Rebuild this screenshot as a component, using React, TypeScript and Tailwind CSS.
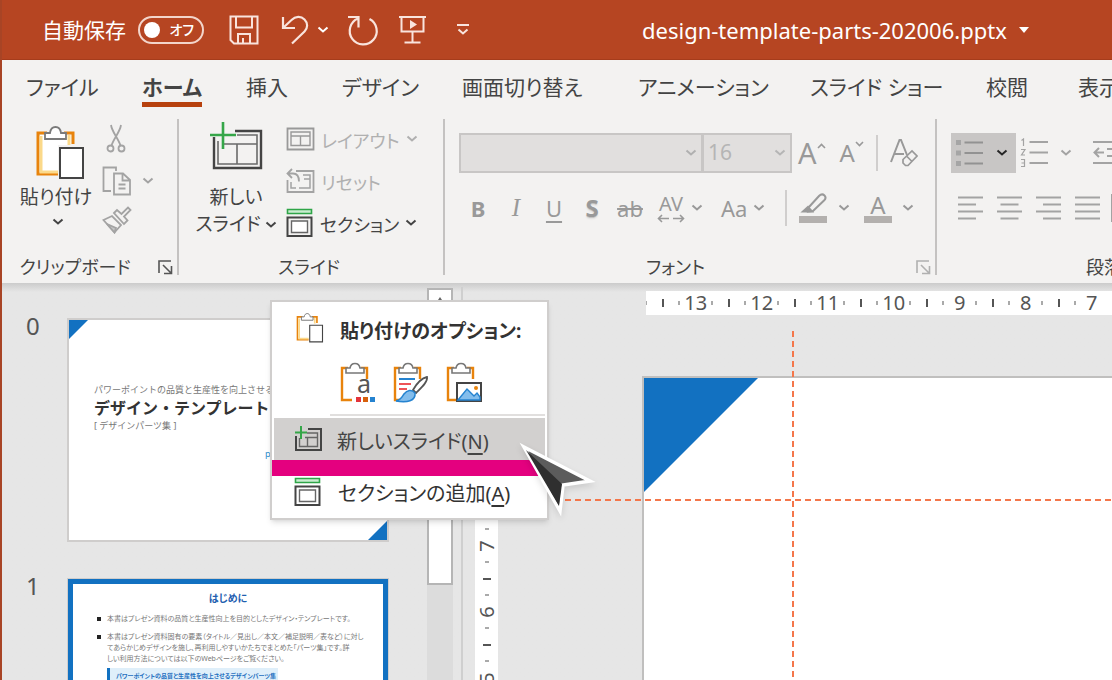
import type { ReactNode } from "react";

const TABS = [
  { label: "ファイル", width: "w-29" },
  { label: "ホーム", width: "w-26", active: true },
  { label: "挿入", width: "w-24" },
  { label: "デザイン", width: "w-30" },
  { label: "画面切り替え", width: "w-44" },
  { label: "アニメーション", width: "w-43" },
  { label: "スライド ショー", width: "w-44" },
  { label: "校閲", width: "w-23" },
  { label: "表示", width: "w-24" },
];

const ALIGNMENTS = [
  { name: "左揃え", d: "M1 1.5H26M1 8.5H19M1 15.5H26M1 22.5H19" },
  { name: "中央揃え", d: "M1 1.5H26M4.5 8.5H22.5M1 15.5H26M4.5 22.5H22.5" },
  { name: "右揃え", d: "M1 1.5H26M8 8.5H26M1 15.5H26M8 22.5H26" },
  { name: "両端揃え", d: "M1 1.5H26M1 8.5H26M1 15.5H26M1 22.5H26" },
];

function Chevron({ className = "" }: { className?: string }) {
  return (
    <svg className={`shrink-0 ${className}`} width="12" height="8" viewBox="0 0 12 8" fill="none" stroke="currentColor" strokeWidth="2">
      <path d="M1.5 1.5 6 5.5l4.5-4" />
    </svg>
  );
}

function Launcher({ name, className }: { name: string; className: string }) {
  return (
    <button aria-label={name} className={className}>
      <svg width="15" height="15" viewBox="0 0 15 15" fill="none" stroke="currentColor" strokeWidth="1.6">
        <path d="M1 13V1h12M5 5l8 8M13.5 6v7.5H6" />
      </svg>
    </button>
  );
}

function Clipboard() {
  return (
    <>
      <path d="M11 7H2v41h20M28 7h9v11" fill="none" stroke="#e8830c" strokeWidth="3" />
      <path d="M4 9h31v10H22v27H4z" fill="#fff" />
      <path d="M5 10v36h17" fill="none" stroke="#fbd98a" strokeWidth="3" />
      <path d="M33 9v10" stroke="#fbd98a" strokeWidth="3" />
      <path d="M9 13V7h5c1-8 10-8 11 0h5v6z" fill="#fff" stroke="#7a7a7a" strokeWidth="1.8" />
      <path d="M24 22h23v30H24z" fill="#fff" stroke="#444" strokeWidth="2" />
    </>
  );
}

function NewSlideIcon({ width, height }: { width: number; height: number }) {
  return (
    <svg width={width} height={height} viewBox="0 0 54 48" fill="none">
      <path d="M5 15v31h47V9H26" stroke="#444" strokeWidth="2.4" />
      <path d="M9 19v23h39V13H28M15 22h33M28 22v20" stroke="#6a6a6a" strokeWidth="1.6" />
      <path d="M14 0v27M1 13h26" stroke="#35a649" strokeWidth="2.6" />
    </svg>
  );
}

function SmallNewSlideIcon() {
  return (
    <svg width="29" height="26" viewBox="0 0 29 26" fill="none">
      <path d="M2 10v14h25V3H14" stroke="#444" strokeWidth="2" />
      <path d="M5.500 12v8.500h18V7H13M11 11.500h12M13.500 11.500v9" stroke="#666" strokeWidth="1.400" />
      <path d="M7 0v13M1 6.500h12" stroke="#35a649" strokeWidth="2" />
    </svg>
  );
}

function SectionIcon() {
  return (
    <svg className="shrink-0" width="28" height="30" viewBox="0 0 28 30" fill="none">
      <path d="M1.5 1.5h24v4h-24z" fill="#c9edcf" stroke="#2fa548" strokeWidth="1.6" />
      <path d="M1.5 9.5h24V28h-24z" stroke="#444" strokeWidth="2" />
      <path d="M5.500 13h16v11.500h-16z" fill="#fff" stroke="#666" strokeWidth="1.4" />
    </svg>
  );
}

function PasteClip({ children }: { children: ReactNode }) {
  return (
    <svg width="38" height="42" viewBox="0 0 38 42" fill="none">
      <path d="M9 6H3v32h10M22 6h6v11" stroke="#e8830c" strokeWidth="2.400" />
      <path d="M7 11V6h4c1-6 9-6 10 0h4v5z" fill="#fff" stroke="#777" strokeWidth="1.600" />
      {children}
    </svg>
  );
}

function TitleBar() {
  return (
    <header className="flex h-[60px] shrink-0 items-center border-b border-[#a53c1c] bg-[#b64522] pl-10 text-white">
      <span id="autosave" className="text-[21px] leading-7">自動保存</span>
      <button role="switch" aria-checked="false" aria-labelledby="autosave" className="ml-3 flex h-7 w-[66px] items-center justify-between rounded-full border-2 border-[#f3d5cb] pr-2 pl-1">
        <span className="size-4 rounded-full bg-white" />
        <span className="text-[14px] leading-5 font-medium">オフ</span>
      </button>
      <button aria-label="上書き保存" className="ml-[25px]">
        <svg width="30" height="30" viewBox="0 0 30 30" fill="none" stroke="#f9e4dd" strokeWidth="2">
          <path d="M1.500 1.500h27v27H5l-3.500-3.500zM7 2v10.500h16V2M9 28v-9h12v9M14 28v-5" />
        </svg>
      </button>
      <button aria-label="元に戻す" className="ml-[22px] flex items-center gap-2">
        <svg width="28" height="30" viewBox="0 0 28 30" fill="none" stroke="#f9e4dd" strokeWidth="2.200">
          <path d="M2 2v11h12M2.500 12.500l8-7.500c4-4 9.500-4 13-.5s3.500 8.500 0 12L11 28.500" />
        </svg>
        <Chevron />
      </button>
      <button aria-label="やり直し" className="ml-[18px]">
        <svg width="32" height="32" viewBox="0 0 32 32" fill="none" stroke="#f9e4dd" strokeWidth="2.200">
          <path d="M1 3h10.500v10.500M11 4.500A13.500 13.500 0 1 0 22.500 5" />
        </svg>
      </button>
      <button aria-label="最初から開始" className="ml-5">
        <svg width="28" height="30" viewBox="0 0 28 30" fill="none" stroke="#f9e4dd" strokeWidth="2">
          <path d="M0 2h27M2.500 2v14.500h22V2M13.500 17v10M5.500 27.500h16" />
          <path d="m11 5 7 4.500-7 4.500z" fill="#f9e4dd" stroke="none" />
        </svg>
      </button>
      <button aria-label="クイック アクセス ツール バーのカスタマイズ" className="ml-[29px]">
        <svg width="14" height="14" viewBox="0 0 14 14" fill="none" stroke="#f9e4dd" strokeWidth="2">
          <path d="M1 2h12M2.500 6.500 7 10.500l4.500-4" />
        </svg>
      </button>
      <button className="ml-[172px] flex items-center gap-3 text-[22px] leading-7 whitespace-nowrap">
        design-template-parts-202006.pptx
        <svg width="10" height="6" viewBox="0 0 10 6" fill="currentColor">
          <path d="M0 0h10L5 6z" />
        </svg>
      </button>
    </header>
  );
}

function Group({ width, label, launcher, children }: { width: string; label: string; launcher?: ReactNode; children: ReactNode }) {
  return (
    <section aria-label={label} className={`flex flex-col pt-2 ${width}`}>
      <div className="flex h-[136px] items-start">{children}</div>
      <div className="flex h-[26px] items-center pr-1 text-[18px] leading-[26px]">
        <span className={`flex-1 text-center whitespace-nowrap ${launcher ? "pr-2.5" : ""}`}>{label}</span>
        {launcher}
      </div>
    </section>
  );
}

function Divider() {
  return <div className="mt-[9px] mb-2 w-0.5 shrink-0 bg-[#c4c2c1]" />;
}

function ClipboardGroup() {
  return (
    <Group width="w-[175px] shrink-0" label="クリップボード" launcher={<Launcher name="クリップボードの設定" className="text-[#555]" />}>
      <button className="ml-[17px] flex w-[74px] flex-col items-center pt-2">
        <svg className="ml-2" width="49" height="54" viewBox="0 0 49 54">
          <Clipboard />
        </svg>
        <span className="mt-1 text-[19px] leading-[26px] whitespace-nowrap">貼り付け</span>
        <Chevron className="ml-1 mt-2" />
      </button>
      <div className="ml-[9px] text-[#a3a3a3]">
        <button aria-label="切り取り" className="flex h-[42px] w-7 items-center justify-center">
          <svg width="20" height="30" viewBox="0 0 20 30" fill="none" stroke="currentColor" strokeWidth="1.800">
            <path d="M5 1c1 7 7 13 9.500 20.500M15 1c-1 7-7 13-9.500 20.500" />
            <circle cx="4.500" cy="24.500" r="3" />
            <circle cx="15.500" cy="24.500" r="3" />
          </svg>
        </button>
        <button aria-label="コピー" className="flex h-[42px] items-center gap-2.5">
          <svg width="30" height="30" viewBox="0 0 30 30" fill="none" stroke="currentColor" strokeWidth="1.800">
            <path d="M9 25H1.500V1.500H14V5M12 7.500h9l7 6.500v14.500H12zM20.500 8v6.500H28M16.500 18.500h7M16.500 22.500h7" />
          </svg>
          <Chevron />
        </button>
        <button aria-label="書式のコピー/貼り付け" className="flex h-9 items-center">
          <svg width="30" height="28" viewBox="0 0 30 28" fill="none" stroke="currentColor" strokeWidth="1.800">
            <path d="M1.500 14 10 10l9 9-6.500 7.500z" />
            <path d="m5 18 9 4-1.500 4.500z" fill="#c5c5c5" />
            <path d="m12 7 3-3 4.500 4L26 1.500 28.500 4 22 10.500l3.500 4L22 18z" />
          </svg>
        </button>
      </div>
    </Group>
  );
}

function SlideGroup() {
  return (
    <Group width="w-[264px] shrink-0" label="スライド">
      <button className="ml-[15px] flex w-[84px] flex-col items-center pt-1 text-[19px] leading-[27px] whitespace-nowrap">
        <NewSlideIcon width={54} height={48} />
        <span className="mt-3.5">新しい</span>
        <span className="flex items-center gap-1">
          スライド
          <Chevron />
        </span>
      </button>
      <div className="ml-2 text-[18px] leading-[26px] whitespace-nowrap">
        <button className="flex h-[42px] items-center gap-1.5 text-[#b0b0b0]">
          <svg width="29" height="24" viewBox="0 0 29 24" fill="none" stroke="#999">
            <path d="M1.500 1.500h26v21h-26z" strokeWidth="1.800" />
            <path d="M5 5h19v13.500H5zM5 9h19M14.500 9v9.500" strokeWidth="1.400" />
          </svg>
          <span className="pt-1">レイアウト</span>
          <Chevron />
        </button>
        <button className="flex h-[42px] items-center gap-1.5 text-[#b0b0b0]">
          <svg width="29" height="26" viewBox="0 0 29 26" fill="none" stroke="#a3a3a3" strokeWidth="1.800">
            <path d="M10 3h17.500v21h-26V12" />
            <path d="M5 14v6h5M13 20h11V7h-7M18 11h6" strokeWidth="1.500" />
            <path d="M6 1 1.500 5.500 6 10M2 5.500h5c5 0 6 3.500 6 8" />
          </svg>
          <span className="pt-1">リセット</span>
        </button>
        <button className="flex h-[42px] items-center gap-1.5">
          <SectionIcon />
          <span className="pt-1">セクション</span>
          <Chevron />
        </button>
      </div>
    </Group>
  );
}

function FontGroup() {
  const SLOT = "flex h-9 w-[38px] items-center justify-center";

  return (
    <Group width="w-[490px] shrink-0" label="フォント" launcher={<Launcher name="フォントの設定" className="text-[#b0b0b0]" />}>
      <div className="pt-[15px] pl-3.5 text-[#999]">
        <div className="flex h-10 items-center">
          <button aria-label="フォント名" className="flex h-10 w-[244px] items-center justify-end border-2 border-[#c8c6c5] bg-[#e1dfde] pr-1 text-[#b0b0b0]">
            <Chevron />
          </button>
          <button aria-label="フォント サイズ" className="-ml-px flex h-10 w-[90px] items-center justify-between border-2 border-[#c8c6c5] bg-[#e1dfde] pr-1 pl-1 text-[21px] text-[#b5b5b5]">
            16
            <Chevron />
          </button>
          <button aria-label="フォント サイズの拡大" className="ml-1.5 flex items-start text-[29px] leading-8">
            A
            <svg className="mt-1.5" width="9" height="6" viewBox="0 0 9 6" fill="none" stroke="currentColor" strokeWidth="1.600">
              <path d="M1 5l3.500-3.500L8 5" />
            </svg>
          </button>
          <button aria-label="フォント サイズの縮小" className="ml-3.5 flex items-start text-[24px] leading-8">
            A
            <svg className="mt-1" width="9" height="6" viewBox="0 0 9 6" fill="none" stroke="currentColor" strokeWidth="1.600">
              <path d="m1 1 3.500 3.500L8 1" />
            </svg>
          </button>
          <div className="ml-3 h-9 w-0.5 bg-[#d0cecd]" />
          <button aria-label="書式のクリア" className="ml-3">
            <svg width="28" height="30" viewBox="0 0 28 30" fill="none" stroke="currentColor" strokeWidth="2">
              <path d="M1 24 9.500 2h1.500l6 15M4 16h10" />
              <path d="M13 21.500 22 13l5 5-9 9.500h-2.500L13 25zM16.500 18l5.500 5.500" strokeWidth="1.700" />
            </svg>
          </button>
        </div>
        <div className="mt-[17px] flex h-9 items-center text-[22px] leading-8">
          <button className={`${SLOT} font-bold`}>B</button>
          <button className={`${SLOT} font-['Liberation_Serif',serif] text-[25px] italic`}>I</button>
          <button className={`${SLOT} underline underline-offset-4`}>U</button>
          <button className={`${SLOT} font-bold text-[24px] text-shadow-sm`}>S</button>
          <button className={`${SLOT} line-through`}>ab</button>
          <button aria-label="文字の間隔" className="ml-2 flex w-12 items-center gap-1.5">
            <span className="flex flex-col items-center text-[20px] leading-5">
              AV
              <svg width="28" height="9" viewBox="0 0 28 9" fill="none" stroke="currentColor" strokeWidth="1.600">
                <path d="M12 4.500H1.500M5 1 1.500 4.500 5 8M16 4.500h10.500M23 1l3.500 3.500L23 8" />
              </svg>
            </span>
            <Chevron />
          </button>
          <button aria-label="文字種の変換" className="ml-4 flex w-12 items-center gap-1.5">
            Aa
            <Chevron />
          </button>
          <div className="ml-4 h-9 w-0.5 bg-[#d0cecd]" />
          <button aria-label="蛍光ペンの色" className="ml-3 flex items-center gap-2.5">
            <svg width="29" height="30" viewBox="0 0 29 30" fill="none" stroke="currentColor" strokeWidth="2">
              <path d="m10 14 10-11c2-2 4-2 5.500-.5s1.500 3-.5 5L14 18l-5 .5z" />
              <path d="m9 14 4 4.500H4z" fill="currentColor" />
              <path d="M0 23h28v7H0z" fill="#b3b0ae" stroke="none" />
            </svg>
            <Chevron />
          </button>
          <button aria-label="フォントの色" className="ml-3.5 flex items-center gap-2.5">
            <span className="flex flex-col items-center text-[24px] leading-[23px]">
              A
              <span className="h-[7px] w-7 bg-[#b3b0ae]" />
            </span>
            <Chevron />
          </button>
        </div>
      </div>
    </Group>
  );
}

function ParagraphGroup() {
  return (
    <section aria-label="段落" className="flex min-w-0 flex-1 flex-col overflow-hidden pt-2">
      <div className="h-[136px] pt-[15px] pl-3.5 text-[#a3a3a3]">
        <div className="flex h-10 items-center">
          <button aria-label="箇条書き" className="flex h-10 w-[65px] shrink-0 items-center gap-3 bg-[#c8c6c5] pl-1 text-[#262626]">
            <svg width="29" height="28" viewBox="0 0 29 28" stroke="#929292" strokeWidth="2">
              <path d="M9.500 3.500H28M9.500 14H28M9.500 24.500H28" />
              <path d="M1 1h5v5H1zM1 11.500h5v5H1zM1 22h5v5H1z" fill="#a5a5a5" stroke="none" />
            </svg>
            <Chevron />
          </button>
          <button aria-label="段落番号" className="ml-1 flex shrink-0 items-center gap-3">
            <svg width="28" height="30" viewBox="0 0 28 30" stroke="currentColor" strokeWidth="2" fill="none">
              <path d="M9.500 4H28M9.500 14.500H28M9.500 25H28" />
              <path d="M1.500 2.500 3.500 1v7M1 11.500h4L1.500 17H5M1 21.500h3.500v7H1M1.500 25h3" strokeWidth="1.200" />
            </svg>
            <Chevron />
          </button>
          <button aria-label="インデントを減らす" className="ml-[21px] shrink-0">
            <svg width="28" height="28" viewBox="0 0 28 28" stroke="currentColor" strokeWidth="2" fill="none">
              <path d="M0 3h28M14 10h14M14 17h14M0 24h28M11 13.500H2M6 9l-4.500 4.500L6 18" />
            </svg>
          </button>
        </div>
        <div className="mt-[17px] flex h-9 items-center gap-3 pl-1.5">
          {ALIGNMENTS.map((item) => (
            <button key={item.name} aria-label={item.name} className="shrink-0">
              <svg width="27" height="24" viewBox="0 0 27 24" stroke="currentColor" strokeWidth="2">
                <path d={item.d} />
              </svg>
            </button>
          ))}
          <button aria-label="均等割り付け" className="-ml-0.5 h-7 w-6 shrink-0 border-2 border-[#a3a3a3]" />
        </div>
      </div>
      <div className="pl-[149px] text-[18px] leading-[26px] whitespace-nowrap">段落</div>
    </section>
  );
}

function Thumbnails() {
  return (
    <aside className="flex w-[425px] shrink-0 flex-col gap-9 overflow-hidden pt-[35px] pl-6 text-[24px] leading-4 text-[#555]">
      <div className="flex shrink-0">
        <span className="w-[41px] shrink-0">0</span>
        <div className="relative h-[224px] w-[322px] border-2 border-[#cfcdcc] bg-white pt-16 pl-[25px] whitespace-nowrap text-[#333] [font-feature-settings:normal]">
          <svg className="absolute top-0 left-0" width="19" height="19" fill="#1271c1"><path d="M0 0h19L0 19z" /></svg>
          <svg className="absolute right-0 bottom-0" width="19" height="19" fill="#1271c1"><path d="M19 0v19H0z" /></svg>
          <p className="text-[9px] leading-3 text-[#777]">パワーポイントの品質と生産性を向上させる</p>
          <h2 className="text-[16px] leading-6 font-bold">デザイン・テンプレート</h2>
          <p className="text-[9px] leading-3 text-[#777]">[ デザインパーツ集 ]</p>
          <p className="mt-4 pl-[171px] text-[9px] leading-3 text-[#2f8fcf]">ppt</p>
        </div>
      </div>
      <div className="flex shrink-0">
        <span className="w-[41px] shrink-0">1</span>
        <div className="h-[224px] w-[322px] border border-[#cfcdcc]">
          <div className="h-full border-[5px] border-[#1271c1] bg-white px-8 pt-2 text-[7px] leading-[11px] whitespace-nowrap text-[#777]">
            <h2 className="text-center text-[10px] leading-3 font-bold text-[#1f5fb0]">はじめに</h2>
            <ul className="mt-[9px] -ml-2 list-none space-y-[7px]">
              <li className="flex gap-1.5">
                <span className="mt-1 size-1 shrink-0 bg-[#222]" />
                <span>本書はプレゼン資料の品質と生産性向上を目的としたデザイン・テンプレートです。</span>
              </li>
              <li className="flex gap-1.5">
                <span className="mt-1 size-1 shrink-0 bg-[#222]" />
                <span>
                  本書はプレゼン資料固有の要素（タイトル／見出し／本文／補足説明／表など）に対し
                  <br />
                  てあらかじめデザインを施し、再利用しやすいかたちでまとめた「パーツ集」です。詳
                  <br />
                  しい利用方法については以下のWebページをご覧ください。
                </span>
              </li>
            </ul>
            <p className="mt-1 ml-0.5 h-8 w-[171px] border-l-[3px] border-[#1271c1] bg-[#dfeffa] pt-[3px] pl-1.5 text-[6px] font-bold text-[#1f6fc0]">
              パワーポイントの品質と生産性を向上させるデザインパーツ集
            </p>
          </div>
        </div>
      </div>
    </aside>
  );
}

function HorizontalRuler() {
  return (
    <div className="ml-[148px] h-6 shrink-0 overflow-hidden bg-white">
      <div className="-ml-2 flex h-full text-[20px] leading-6 text-[#555]">
        {[13, 12, 11, 10, 9, 8, 7].map((n) => (
          <div key={n} className="grid w-[66px] shrink-0 grid-cols-4 items-center justify-items-center">
            <span className="h-1 w-0.5 bg-[#aaa]" />
            <span className="h-2 w-0.5 bg-[#555]" />
            <span className="h-1 w-0.5 bg-[#aaa]" />
            <span>{n}</span>
          </div>
        ))}
      </div>
    </div>
  );
}

function VerticalRuler() {
  return (
    <div className="mt-[56px] w-[23px] shrink-0 overflow-hidden bg-white pt-[182px] text-[20px] leading-4 text-[#555]">
      {[7, 6, 5].map((n) => (
        <div key={n} className="grid h-[66px] grid-rows-4 place-items-center">
          <span className="h-0.5 w-1 bg-[#aaa]" />
          <span className="-rotate-90">{n}</span>
          <span className="h-0.5 w-1 bg-[#aaa]" />
          <span className="h-0.5 w-2 bg-[#555]" />
        </div>
      ))}
    </div>
  );
}

function ContextMenu() {
  return (
    <div role="menu" className="absolute top-[17px] left-[268px] w-[279px] border-2 border-[#d0cecd] bg-white p-0.5 pt-2 text-[20px] leading-7 whitespace-nowrap text-[#333] shadow-md">
      <div className="flex h-9 items-center pl-[22px] text-[19px] font-bold">
        <svg className="shrink-0" width="28" height="30" viewBox="0 0 49 54"><Clipboard /></svg>
        <span className="ml-4 pt-1.5">貼り付けのオプション:</span>
      </div>
      <div className="mt-4 flex gap-[15px] pl-[65px]">
        <button aria-label="貼り付け先のテーマを使用" role="menuitem">
          <PasteClip>
            <text x="18" y="31" fontSize="25" fill="#555">a</text>
            <path d="M17 35h5v5h-5z" fill="#e3343b" />
            <path d="M24 35h5v5h-5z" fill="#d8600c" />
            <path d="M31 35h5v5h-5z" fill="#2583d0" />
          </PasteClip>
        </button>
        <button aria-label="元の書式を保持" role="menuitem">
          <PasteClip>
            <path d="M7 17h16" stroke="#2583d0" strokeWidth="2" />
            <path d="M7 22h12M7 27h8" stroke="#ee5357" strokeWidth="2" />
            <path d="M21 28C25 21 30 16 35 15c1 5-6 11-11 16z" fill="#fff" stroke="#555" strokeWidth="1.800" />
            <path d="M23 31c1 8-8 10-19 8 5-1 6-4 8-7 3-4 8-5 11-1z" fill="#83bdec" stroke="#2583d0" strokeWidth="1.500" />
          </PasteClip>
        </button>
        <button aria-label="図" role="menuitem">
          <PasteClip>
            <path d="M12 21h24v18H12z" fill="#fff" stroke="#444" strokeWidth="2" />
            <path d="m13 38 9-11 7 7 3-3 3 4v3z" fill="#83bdec" stroke="#2583d0" strokeWidth="1.400" />
            <circle cx="31" cy="26" r="2" fill="#e8830c" />
          </PasteClip>
        </button>
      </div>
      <div className="mt-2.5 ml-[56px] h-0.5 bg-[#e1dfde]" />
      <button role="menuitem" className="mt-0.5 flex h-[42px] w-full items-center bg-[#d2d0cf] pl-5 text-[#444]">
        <SmallNewSlideIcon />
        <span className="ml-3.5 pt-1.5">新しいスライド(<u className="underline-offset-4">N</u>)</span>
      </button>
      <div className="-ml-0.5 h-4 w-[268px] bg-[#e4007f]" />
      <button role="menuitem" className="flex h-10 w-full items-center pb-2 pl-5">
        <SectionIcon />
        <span className="ml-4 pt-1">セクションの追加(<u className="underline-offset-4">A</u>)</span>
      </button>
      <svg className="absolute top-[138px] left-[246px] drop-shadow-md" width="80" height="80" viewBox="0 0 80 80">
        <path d="M6 7 72 41 45 45 42 71z" fill="#5c5c5c" stroke="#fff" strokeWidth="3.500" />
        <path d="M8 10 44 44 41 66z" fill="#2f2f2f" />
      </svg>
    </div>
  );
}

export default function App() {
  return (
    <div className="flex h-screen flex-col overflow-hidden border-l-2 border-[#a84425] bg-[#e6e6e6] font-['Noto_Sans','Noto_Sans_CJK_JP',sans-serif] text-[#444] [font-feature-settings:'palt']">
      <TitleBar />
      <nav className="flex h-[50px] shrink-0 items-start overflow-hidden bg-[#f3f2f1] pt-3 pl-6 text-[21px] leading-[30px] whitespace-nowrap">
        {TABS.map((tab) => (
          <div key={tab.label} className={`shrink-0 ${tab.width}`}>
            <button className={tab.active ? "border-b-[5px] border-[#b7410e] font-bold" : ""}>{tab.label}</button>
          </div>
        ))}
      </nav>
      <div className="flex h-[173px] shrink-0 overflow-hidden bg-[#f3f2f1]">
        <ClipboardGroup />
        <Divider />
        <SlideGroup />
        <Divider />
        <FontGroup />
        <Divider />
        <ParagraphGroup />
      </div>
      <main className="relative flex min-h-0 flex-1 bg-linear-to-b from-[#cbcbcb] to-[#e6e6e6] to-[9px]">
        <Thumbnails />
        <div className="mt-[5px] w-[26px] shrink-0 bg-[#dcdcdc]">
          <div className="flex h-6 items-center justify-center border-2 border-[#b5b5b5] bg-white">
            <svg width="8" height="6" fill="#666"><path d="M4 0l4 6H0z" /></svg>
          </div>
          <div className="h-[273px] border-2 border-[#b5b5b5] bg-white" />
        </div>
        <div className="mt-1 ml-2 w-0.5 shrink-0 bg-[#cfcfcf]" />
        <div className="w-3 shrink-0" />
        <VerticalRuler />
        <div className="flex min-w-0 flex-1 flex-col overflow-hidden pt-2">
          <HorizontalRuler />
          <div className="mt-[61px] ml-[144px] flex-1 border-t-2 border-l-2 border-[#c0bfbe] bg-white">
            <svg width="114" height="114" fill="#1271c1"><path d="M0 0h114L0 114z" /></svg>
          </div>
        </div>
        <svg className="absolute inset-0 size-full" stroke="#f4764a" strokeWidth="2" strokeDasharray="6 4">
          <line x1="563" y1="217" x2="100%" y2="217" />
          <line x1="791" y1="48" x2="791" y2="100%" />
        </svg>
        <ContextMenu />
      </main>
    </div>
  );
}
